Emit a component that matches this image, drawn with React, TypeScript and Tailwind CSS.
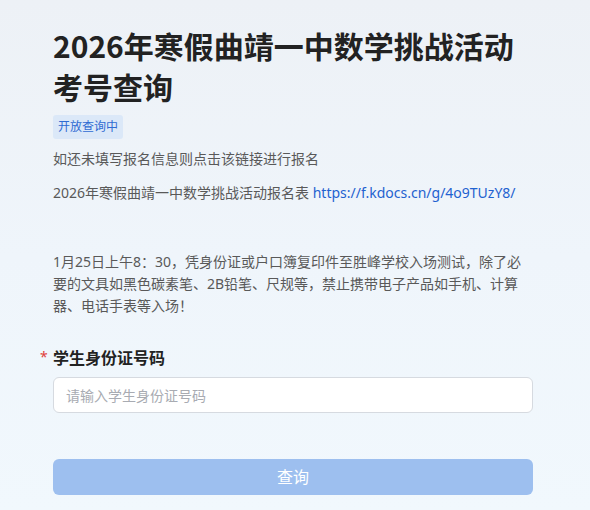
import { useState } from 'react'

export default function App() {
  const [idNo, setIdNo] = useState('')

  return (
    <div
      className="min-h-[510px] w-full bg-gradient-to-b from-[#edf1f6] via-[#eff5fb] to-[#f1f8fd]"
      style={{ fontFamily: '"Noto Sans", "Noto Sans CJK SC", sans-serif' }}
    >
      <div className="ml-[53px] w-[480px] pt-[25px]">
        <h1
          className="text-[30px] font-bold leading-[41px] text-[#222222]"
          style={{ fontFamily: '"Noto Sans CJK SC", sans-serif' }}
        >
          2026年寒假曲靖一中数学挑战活动考号查询
        </h1>

        <div className="mt-[8px] inline-block rounded-[3px] bg-[#dbe8f8] px-[5px] text-[12px] leading-[24px] text-[#2f6bd3]">
          开放查询中
        </div>

        {/* registration hint */}
        <p className="mt-[9px] text-[14px] leading-[22px] text-[#595959]">
          如还未填写报名信息则点击该链接进行报名
        </p>
        <p className="mt-[12px] text-[14px] leading-[22px] text-[#595959]">
          2026年寒假曲靖一中数学挑战活动报名表{' '}
          <a href="#" className="text-[#1f62d0]">https://f.kdocs.cn/g/4o9TUzY8/</a>
        </p>

        <p className="mt-[47px] text-[14px] leading-[22px] text-[#595959]">
          1月25日上午8：30，凭身份证或户口簿复印件至胜峰学校入场测试，除了必要的文具如黑色碳素笔、2B铅笔、尺规等，禁止携带电子产品如手机、计算器、电话手表等入场！
        </p>

        {/* form */}
        <div className="mt-[28px] -ml-[13px] flex items-center text-[16px] leading-[24px]">
          <span className="w-[13px] text-[14px] text-[#e0403a]">*</span>
          <span className="font-bold text-[#222222]" style={{ fontFamily: '"Noto Sans CJK SC", sans-serif' }}>
            学生身份证号码
          </span>
        </div>

        <input
          value={idNo}
          onChange={e => setIdNo(e.target.value)}
          placeholder="请输入学生身份证号码"
          className="mt-[8px] block h-[36px] w-full rounded-[6px] border border-[#d6dae0] bg-white px-[12px] text-[14px] text-[#333] outline-none placeholder:text-[#a8abb2]"
        />

        <button
          disabled={!idNo}
          className="mt-[46px] block h-[36px] w-full rounded-[6px] bg-[#9dbfef] text-[16px] text-white"
        >
          查询
        </button>
      </div>
    </div>
  )
}
